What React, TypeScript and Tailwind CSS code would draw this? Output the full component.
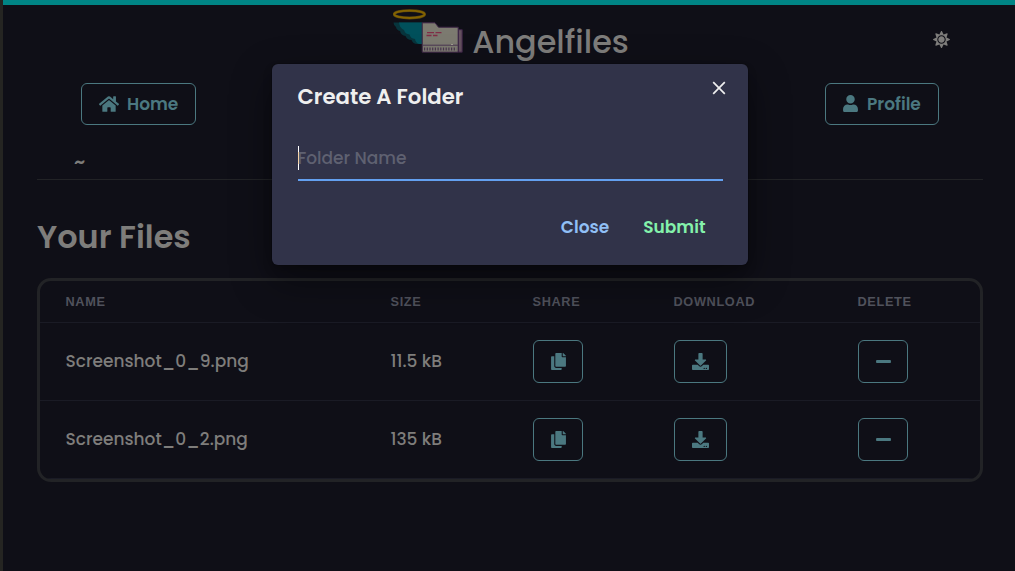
import React from "react";
import { FaCopy, FaDownload, FaHome, FaMinus, FaSun, FaUser } from "react-icons/fa";

const files = [
    { name: "Screenshot_0_9.png", size: "11.5 kB" },
    { name: "Screenshot_0_2.png", size: "135 kB" },
];

const columns = ["Name", "Size", "Share", "Download", "Delete"];

const Logo = () => {
    return (
        <svg width="72" height="46" viewBox="0 0 72 46">
            <path d="M0.500 13.500H29V35H24Q20 35 18.500 31Q14 31 12.500 27Q8 26.500 7 22Q3.500 21 3 18Q0.500 16.500 0.500 13.500Z" fill="#07343c" />
            <path d="M6 13.500H29V35H26Q22.500 33.500 22 30Q17.500 29.500 16.500 25.500Q12 25 11 21Q6.500 19 6 13.500Z" fill="#00505b" />
            <ellipse cx="16.400" cy="5.300" rx="15.200" ry="3.700" fill="none" stroke="#584410" strokeWidth="2.800" />
            <ellipse cx="16.400" cy="5.300" rx="15.200" ry="3.700" fill="none" stroke="#846400" strokeWidth="1.800" />
            <path d="M65.500 20.700H69.200V43.200H65.500Z" fill="#64505f" stroke="#3b2345" />
            <path d="M29.200 13.800H42L45.500 18.200H65.200V43.200H29.200Z" fill="#7c7a70" stroke="#3b2345" />
            <path d="M29.500 36.200H65" stroke="#4a3650" />
            <path d="M31 40H63.500" stroke="#4a3650" strokeWidth="3" strokeDasharray="1.200 1.500" />
            <path d="M58 35.500H60" stroke="#a09c90" />
            <path d="M34 23.700H41M42.500 23.700H48.500M33.500 26.500H38.500M40 26.500H44.500" stroke="#802c46" strokeWidth="1.300" />
        </svg>
    )
}

const OutlineButton = ({ title, className, children }: { title: string; className: string; children: React.ReactNode }) => {
    return (
        <button title={title} className={`flex items-center rounded-[6px] border border-[#4b7880] text-[#4b7880] ${className}`}>
            {children}
        </button>
    )
}

const FileTable = () => {
    return (
        <div className="mt-[20px] h-[204px] rounded-[14px] border-[3px] border-[#222326] overflow-hidden">
            <div className="grid grid-cols-[325px_142px_141px_184px_1fr] h-[42px] items-center border-b border-[#1a1b25]">
                {columns.map((column) => (
                    <div key={column} className="pl-[25.5px] font-['Liberation_Sans',sans-serif] text-[12.75px] leading-[17px] font-bold tracking-[0.64px] uppercase text-[#50525c]">{column}</div>
                ))}
            </div>
            {files.map((file) => (
                <div key={file.name} className="grid grid-cols-[325px_142px_141px_184px_1fr] h-[78px] items-center border-b border-[#1a1b25] text-[#7e7d7b]">
                    <div className="pl-[25.5px] text-[17px]">{file.name}</div>
                    <div className="pl-[25.5px] text-[17px]">{file.size}</div>
                    <div className="pl-[25.5px]">
                        <OutlineButton title="share" className="w-[50px] h-[43px] justify-center"><FaCopy size={17} className="ml-px" /></OutlineButton>
                    </div>
                    <div className="pl-[25.5px]">
                        <OutlineButton title="download" className="w-[53px] h-[43px] justify-center"><FaDownload size={17} /></OutlineButton>
                    </div>
                    <div className="pl-[25.5px]">
                        <OutlineButton title="delete" className="w-[50px] h-[43px] justify-center"><FaMinus size={17} className="ml-px" /></OutlineButton>
                    </div>
                </div>
            ))}
        </div>
    )
}

const CreateFolderModal = () => {
    return (
        <div className="absolute left-[269px] top-[64px] w-[476px] h-[201px] rounded-[6px] bg-[#313349] shadow-[0_0_0_1px_rgba(0,0,0,0.1),0_5px_10px_rgba(0,0,0,0.2),0_15px_40px_rgba(0,0,0,0.4)] px-[25.5px] flex flex-col">
            <div className="flex justify-between pt-[17px]">
                <h2 className="text-[21.25px] leading-[32px] font-semibold text-[#efefef]">Create A Folder</h2>
                <button title="close" className="w-[14px] h-[14px] mr-[-3px] text-[#efefef]">
                    <svg width="14" height="14" viewBox="0 0 14 14" stroke="currentColor" strokeWidth="1.7">
                        <path d="M1.200 1.200L12.800 12.800M12.800 1.200L1.200 12.800" />
                    </svg>
                </button>
            </div>
            <div className="mt-[24px] h-[44px] border-b-2 border-[#63a0f0] flex items-center text-[17px] text-[#5f6171]">
                <span className="w-px h-[24px] bg-white" />
                <span className="ml-[-1px] mt-[2px]">Folder Name</span>
            </div>
            <div className="mt-[33px] flex justify-end gap-[34px] pr-[17px] text-[17px] leading-[26px] font-semibold">
                <button className="text-[#90bff5]">Close</button>
                <button className="text-[#84f2ab]">Submit</button>
            </div>
        </div>
    )
}

const App = () => {
    return (
        <div className="relative w-[1015px] h-[571px] overflow-hidden border-l-[3px] border-[#252522] bg-[#0f0f17] font-[Poppins,Inter,sans-serif] font-medium flex flex-col">
            <div className="h-[5px] shrink-0 bg-[#008585]" />
            <div className="pl-[34px] pr-[32px] flex flex-col">
                <header className="grid grid-cols-[1fr_auto_1fr] h-[78px] items-start">
                    <span />
                    <div className="flex pt-[4px] pl-[2px] gap-[7px]">
                        <Logo />
                        <h1 className="pt-[8px] text-[31.875px] leading-[51px] text-[#7e7d7b]">Angelfiles</h1>
                    </div>
                    <button title="theme" className="justify-self-end mt-[26px] mr-[33px] text-[#7e7d7b]"><FaSun size={17} /></button>
                </header>
                <nav className="flex justify-between px-[44px] text-[17px] font-semibold">
                    <OutlineButton title="home" className="w-[115px] h-[42px] gap-[8px] pl-[17px]"><FaHome size={20} /><span className="mt-px">Home</span></OutlineButton>
                    <OutlineButton title="profile" className="w-[114px] h-[42px] gap-[8px] pl-[16px]"><FaUser size={17} className="mb-px" /><span className="mt-px">Profile</span></OutlineButton>
                </nav>
                <div className="h-[55px] pl-[37px] pt-[24px] border-b border-[#222326] text-[19px] leading-[26px] font-semibold text-[#7e7d7b]">~</div>
                <h2 className="mt-[37px] text-[31.875px] leading-[41px] font-semibold text-[#7e7d7b]">Your Files</h2>
                <FileTable />
            </div>
            <CreateFolderModal />
        </div>
    )
}

export default App;
